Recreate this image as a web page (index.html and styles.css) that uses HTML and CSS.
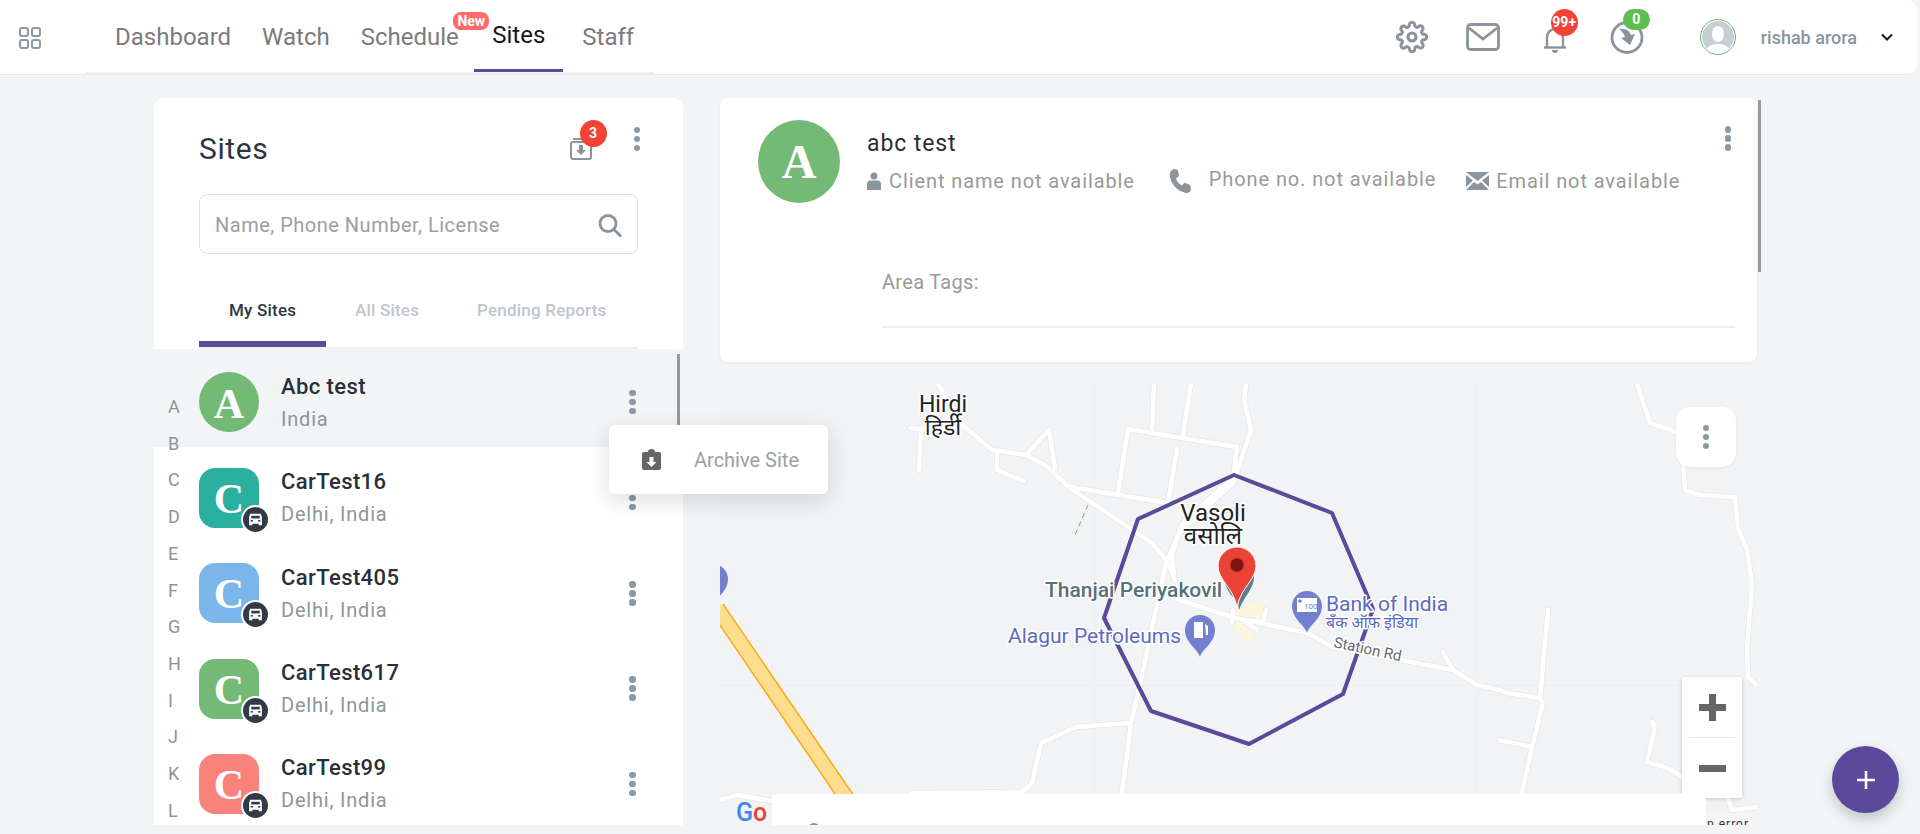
FILE: index.html
```html
<!DOCTYPE html>
<html lang="en">
<head>
    <meta charset="UTF-8">
    <title>Sites</title>
    <link rel="stylesheet" href="styles.css">
</head>
<body>

    <header class="topbar">
        <svg class="apps-icon" viewBox="0 0 22 22"><rect x="1" y="1" width="8" height="8" rx="2"/><rect x="13" y="1" width="8" height="8" rx="2"/><rect x="1" y="13" width="8" height="8" rx="2"/><rect x="13" y="13" width="8" height="8" rx="2"/></svg>

        <nav class="nav">
            <a class="nav-item first">Dashboard</a>
            <a class="nav-item">Watch</a>
            <a class="nav-item schedule">Schedule<span class="new-badge">New</span></a>
            <a class="nav-item active">Sites</a>
            <a class="nav-item staff">Staff</a>
        </nav>

        <div class="tools">
            <svg class="tool gear" viewBox="0 0 24 24"><circle cx="12" cy="12" r="3"/><path d="M19.4 15a1.65 1.65 0 0 0 .33 1.82l.06.06a2 2 0 0 1 0 2.83 2 2 0 0 1-2.83 0l-.06-.06a1.65 1.65 0 0 0-1.82-.33 1.65 1.65 0 0 0-1 1.51V21a2 2 0 0 1-2 2 2 2 0 0 1-2-2v-.09A1.65 1.65 0 0 0 9 19.4a1.65 1.65 0 0 0-1.82.33l-.06.06a2 2 0 0 1-2.83 0 2 2 0 0 1 0-2.83l.06-.06a1.65 1.65 0 0 0 .33-1.82 1.65 1.65 0 0 0-1.51-1H3a2 2 0 0 1-2-2 2 2 0 0 1 2-2h.09A1.65 1.65 0 0 0 4.6 9a1.65 1.65 0 0 0-.33-1.82l-.06-.06a2 2 0 0 1 0-2.83 2 2 0 0 1 2.83 0l.06.06a1.65 1.65 0 0 0 1.82.33H9a1.65 1.65 0 0 0 1-1.51V3a2 2 0 0 1 2-2 2 2 0 0 1 2 2v.09a1.65 1.65 0 0 0 1 1.51 1.65 1.65 0 0 0 1.82-.33l.06-.06a2 2 0 0 1 2.83 0 2 2 0 0 1 0 2.83l-.06.06a1.65 1.65 0 0 0-.33 1.82V9a1.65 1.65 0 0 0 1.51 1H21a2 2 0 0 1 2 2 2 2 0 0 1-2 2h-.09a1.65 1.65 0 0 0-1.51 1z"/></svg>
            <svg class="tool mail" viewBox="0 0 34 28"><rect x="1.5" y="1.5" width="31" height="25" rx="3"/><path d="M3 5l14 11L31 5"/></svg>
            <span class="tool-wrap bell">
                <svg class="tool" viewBox="0 0 24 26"><path d="M4 20V10a8 8 0 0 1 16 0v10"/><path d="M1 20.500h22"/><path class="solid" d="M9 23h6a3 3 0 0 1-6 0z"/></svg>
                <span class="count red">99+</span>
            </span>
            <span class="tool-wrap clock">
                <svg class="tool" viewBox="0 0 34 33"><circle cx="17" cy="16.500" r="15"/><path class="solid" d="M9 8c6-1 10 1 12 6l4-1-5 11-9-7 4-1c-1-3-3-6-6-8z"/></svg>
                <span class="count green">0</span>
            </span>
            <span class="user-pic">
                <svg viewBox="0 0 32 32"><circle cx="16" cy="16" r="16" fill="#c9ced4"/><ellipse cx="16" cy="13" rx="6" ry="8" fill="#fff"/><path d="M4 32c0-7 6-9 12-9s12 2 12 9z" fill="#fff"/></svg>
            </span>
            <span class="user-name">rishab arora</span>
            <svg class="chevron" viewBox="0 0 12 8"><path d="M1 1.500l5 5 5-5"/></svg>
        </div>
    </header>

    <main class="layout">

        <section class="sidebar">
            <div class="sites-card">
                <div class="sites-head">
                    <h1>Sites</h1>
                    <span class="archive-btn">
                        <svg viewBox="0 0 22 24"><path class="line" d="M3 3h16"/><rect class="line" x="1" y="6" width="20" height="17" rx="2"/><path class="fill" d="M9 9h4v5h3l-5 5-5-5h3z"/></svg>
                        <span class="count red">3</span>
                    </span>
                    <span class="dots"><i></i><i></i><i></i></span>
                </div>
                <div class="search">
                    <input type="text" placeholder="Name, Phone Number, License">
                    <svg viewBox="0 0 24 24"><circle cx="10" cy="10" r="8"/><path d="M16 16l7 7"/></svg>
                </div>
                <div class="tabs">
                    <a class="tab active">My Sites</a>
                    <a class="tab all">All Sites</a>
                    <a class="tab pending">Pending Reports</a>
                </div>
            </div>

            <div class="site-list">
                <div class="site-row selected">
                    <span class="site-pic round green-bg">A</span>
                    <div class="site-text"><div class="site-name">Abc test</div><div class="site-place">India</div></div>
                    <span class="dots"><i></i><i></i><i></i></span>
                </div>
                <div class="site-row">
                    <span class="site-pic teal-bg">C<span class="car"><svg viewBox="0 0 16 16"><path d="M3 2.500h10l1 3v8h-3v-1.500H5v1.500H2v-8z"/><rect class="win" x="4" y="4.500" width="8" height="2.500"/><rect class="win" x="3.500" y="8.500" width="2" height="1.500"/><rect class="win" x="10.500" y="8.500" width="2" height="1.500"/></svg></span></span>
                    <div class="site-text"><div class="site-name">CarTest16</div><div class="site-place">Delhi, India</div></div>
                    <span class="dots"><i></i><i></i><i></i></span>
                </div>
                <div class="site-row">
                    <span class="site-pic blue-bg">C<span class="car"><svg viewBox="0 0 16 16"><path d="M3 2.500h10l1 3v8h-3v-1.500H5v1.500H2v-8z"/><rect class="win" x="4" y="4.500" width="8" height="2.500"/><rect class="win" x="3.500" y="8.500" width="2" height="1.500"/><rect class="win" x="10.500" y="8.500" width="2" height="1.500"/></svg></span></span>
                    <div class="site-text"><div class="site-name">CarTest405</div><div class="site-place">Delhi, India</div></div>
                    <span class="dots"><i></i><i></i><i></i></span>
                </div>
                <div class="site-row">
                    <span class="site-pic green-bg">C<span class="car"><svg viewBox="0 0 16 16"><path d="M3 2.500h10l1 3v8h-3v-1.500H5v1.500H2v-8z"/><rect class="win" x="4" y="4.500" width="8" height="2.500"/><rect class="win" x="3.500" y="8.500" width="2" height="1.500"/><rect class="win" x="10.500" y="8.500" width="2" height="1.500"/></svg></span></span>
                    <div class="site-text"><div class="site-name">CarTest617</div><div class="site-place">Delhi, India</div></div>
                    <span class="dots"><i></i><i></i><i></i></span>
                </div>
                <div class="site-row">
                    <span class="site-pic salmon-bg">C<span class="car"><svg viewBox="0 0 16 16"><path d="M3 2.500h10l1 3v8h-3v-1.500H5v1.500H2v-8z"/><rect class="win" x="4" y="4.500" width="8" height="2.500"/><rect class="win" x="3.500" y="8.500" width="2" height="1.500"/><rect class="win" x="10.500" y="8.500" width="2" height="1.500"/></svg></span></span>
                    <div class="site-text"><div class="site-name">CarTest99</div><div class="site-place">Delhi, India</div></div>
                    <span class="dots"><i></i><i></i><i></i></span>
                </div>

                <div class="alphabet">
                    <span>A</span><span>B</span><span>C</span><span>D</span><span>E</span><span>F</span><span>G</span><span>H</span><span>I</span><span>J</span><span>K</span><span>L</span>
                </div>
                <div class="list-scroll"></div>
            </div>

            <div class="row-menu">
                <svg viewBox="0 0 19 21"><path d="M2 3h4a3.500 3 0 0 1 7 0h4a2 2 0 0 1 2 2v14a2 2 0 0 1-2 2H2a2 2 0 0 1-2-2V5a2 2 0 0 1 2-2z"/><path class="arrow" d="M7.500 8h4v5h3l-5 5-5-5h3z"/></svg>
                <span>Archive Site</span>
            </div>
        </section>

        <section class="content">
            <div class="detail-card">
                <div class="detail-top">
                    <span class="detail-pic">A</span>
                    <div class="detail-info">
                        <div class="detail-name">abc test</div>
                        <div class="detail-meta">
                            <svg class="person" viewBox="0 0 14 18"><circle cx="7" cy="4" r="3.500"/><path d="M0 18v-6a3.500 3.500 0 0 1 3.500-3.500h7A3.500 3.500 0 0 1 14 12v6z"/></svg>
                            <span class="client">Client name not available</span>
                            <svg class="phone" viewBox="3 1 19 22"><path d="M6.500 1l4 .8 1.200 5.700-3 2.200c1 3 3 5 5.500 6.500l2.500-2.500 5.300 2 .5 4.500c-1 2-2.500 3-4.500 2.800C10 21.500 3.500 14 3 6.500 3 4 4.500 2 6.500 1z"/></svg>
                            <span class="phone-text">Phone no. not available</span>
                            <svg class="envelope" viewBox="0 0 23 18"><path d="M0 0h23L11.500 9z"/><path d="M0 3l7 5.500L0 15zM23 3l-7 5.500 7 6.500z"/><path d="M0 18l8-8 3.500 2.500L15 10l8 8z"/></svg>
                            <span>Email not available</span>
                        </div>
                    </div>
                    <span class="dots"><i></i><i></i><i></i></span>
                </div>
                <div class="area-tags">Area Tags:</div>
                <div class="card-scroll"></div>
            </div>

            <div class="map">
                <svg class="map-canvas" viewBox="0 0 1037 441">
                    <defs>
                        <g id="roads">
                            <polyline points="218,0 245,43 272,66 306,71 325,81 350,104 432,159 448,178 455,196"/>
                            <polyline points="190,44 201,45 245,43"/>
                            <polyline points="201,45 199,86"/>
                            <polyline points="277,69 277,86 304,97"/>
                            <polyline points="306,71 329,46 335,84"/>
                            <polyline points="350,103 448,119"/>
                            <polyline points="398,109 408,45 517,63 513,96"/>
                            <polyline points="432,48 434,0"/>
                            <polyline points="463,51 471,0"/>
                            <polyline points="457,65 448,119"/>
                            <polyline points="526,0 524,16 531,46 513,99 459,149 446,179 421,296 411,339 402,409"/>
                            <polyline points="510,96 462,140 452,170 454,190"/>
                            <polyline points="453,214 512,233 587,249 613,263 680,276 733,286 757,301 780,306 787,309 820,314"/>
                            <polyline points="723,268 733,286"/>
                            <polyline points="828,226 820,314 823,319 812,363 802,409"/>
                            <polyline points="780,356 812,363"/>
                            <polyline points="917,0 930,39 957,48"/>
                            <polyline points="963,83 965,106 980,111 1015,113 1018,144 1027,166 1032,199 1027,266 1028,293 1037,301"/>
                            <polyline points="932,338 935,343 927,378 948,384 962,393"/>
                            <polyline points="1008,414 1012,426 1037,423"/>
                            <polyline points="408,339 356,343 321,359 312,399 302,408 191,409"/>
                            <polyline points="0,416 17,411 52,417"/>
                            <polyline points="512,239 513,226"/>
                            <polyline points="523,236 537,246"/>
                            <polyline points="527,236 543,238 546,226"/>
                        </g>
                        <path id="poi" d="M0 27C-2 19-15 13-15 0a15 15 0 0 1 30 0C15 13 2 19 0 27z"/>
                    </defs>

                    <path class="tile-seam" d="M0 301H1037M374 0V441M757 0V441"/>
                    <path class="landuse" d="M509 233L525 220 545 216 543 240 528 259 510 240z"/>
                    <use href="#roads" class="road-casing"/>
                    <use href="#roads" class="road-fill"/>
                    <path class="trail" d="M368 121L355 151"/>
                    <path class="highway-edge" d="M-3 224L128 416"/>
                    <path class="highway-fill" d="M-3 224L128 416"/>

                    <use href="#poi" x="-7" y="195" class="poi"/>
                    <use href="#poi" x="480" y="246" class="poi"/>
                    <use href="#poi" x="587" y="222" class="poi"/>
                    <path class="poi-glyph" d="M474 238h9v16h-9zM485 240l3 2v9h-2z"/>
                    <rect class="poi-glyph" x="577" y="214" width="20" height="14"/>
                    <circle class="poi" cx="580" cy="217" r="1.800"/>
                    <text class="poi-mini" x="584" y="225">100</text>

                    <path class="temple" d="M505 193C504 202 509 209 514 214 511 206 509 199 505 193zM534 191C535 204 524 212 519 226 516 212 526 202 534 191z"/>

                    <polygon class="fence" points="514,91 612,129 653,225 623,310 529,360 431,327 384,234 418,135"/>

                    <text class="place" x="223" y="28" text-anchor="middle">Hirdi</text>
                    <text class="place" x="223" y="51" text-anchor="middle" lang="hi">हिर्डी</text>
                    <text class="place big" x="493" y="137" text-anchor="middle">Vasoli</text>
                    <text class="place big" x="493" y="160" text-anchor="middle" lang="hi">वसोलि</text>
                    <text class="temple-label" x="325" y="213">Thanjai Periyakovil</text>
                    <text class="poi-label" x="288" y="259">Alagur Petroleums</text>
                    <text class="poi-label" x="606" y="227">Bank of India</text>
                    <text class="poi-label small" x="606" y="244" lang="hi">बँक ऑफ इंडिया</text>
                    <text class="road-label" transform="translate(613 263) rotate(12)">Station Rd</text>

                    <path class="pin" d="M517 223C513 203 498 196 498 182a19 19 0 0 1 38 0C536 196 521 203 517 223z"/>
                    <circle class="pin-dot" cx="517" cy="181" r="6.700"/>

                    <text class="google" x="16" y="437"><tspan class="g-blue">G</tspan><tspan class="g-red">o</tspan></text>
                    <rect class="attrib" x="986" y="429" width="51" height="12"/>
                    <text class="attrib-text" x="987" y="444">p error</text>
                </svg>

                <span class="map-menu"><span class="dots"><i></i><i></i><i></i></span></span>
                <div class="zoom-box">
                    <span class="zoom-btn"><svg viewBox="0 0 27 27"><path d="M10 0h7v10h10v7H17v10h-7V17H0v-7h10z"/></svg></span>
                    <span class="zoom-line"></span>
                    <span class="zoom-btn"><svg viewBox="0 0 27 27"><path d="M0 10h27v7H0z"/></svg></span>
                </div>
                <div class="map-panel"><i></i></div>
            </div>
        </section>

    </main>

    <a class="fab"><svg viewBox="0 0 18 18"><path d="M7.700 0h2.600v7.700H18v2.600h-7.700V18H7.700v-7.700H0V7.700h7.700z"/></svg></a>

</body>
</html>
```

FILE: styles.css
```css
* {
    box-sizing: border-box;
}

html, body {
    height: 834px;
    overflow: hidden;
}

body {
    margin: 0;
    background: #f2f5f6;
    font-family: Roboto, sans-serif;
    color: #2f3743;
}

/* top bar */
.topbar {
    display: flex;
    align-items: stretch;
    width: 1917px;
    height: 75px;
    background: #fff;
    border-bottom: 1px solid #e7eaec;
    border-bottom-right-radius: 10px;
    border-top-right-radius: 10px;
}

.apps-icon {
    width: 22px;
    height: 22px;
    margin: 27px 0 0 19px;
    fill: none;
    stroke: #8f99a3;
    stroke-width: 2;
}

.nav {
    display: flex;
    width: 568px;
    height: 74px;
    margin-left: 45px;
    border-bottom: 2px solid #edeef0;
}

.nav-item {
    position: relative;
    padding: 0 15.5px;
    font-size: 24px;
    line-height: 75px;
    color: #7b7b7b;
}

.nav-item.first {
    padding-left: 29px;
}

.nav-item.active {
    height: 72px;
    padding: 0 18px 0 18px;
    border-bottom: 3px solid #5b4a9a;
    line-height: 71px;
    color: #14171c;
}

.nav-item.staff {
    margin-left: 3.500px;
}

.new-badge {
    position: absolute;
    top: 12px;
    right: -15px;
    width: 36px;
    height: 18px;
    background: #ff6b6b;
    border-radius: 8px;
    font-size: 14px;
    font-weight: 700;
    line-height: 18px;
    text-align: center;
    color: #fff;
}

.tools {
    display: flex;
    align-items: center;
    margin-left: auto;
    padding-right: 24px;
}

.tool {
    display: block;
    fill: none;
    stroke: #8b949c;
    stroke-width: 2;
}

.tool .solid {
    fill: #8b949c;
    stroke: none;
}

.gear {
    width: 32px;
    height: 32px;
    stroke-width: 2.300;
}

.mail {
    width: 34px;
    height: 28px;
    margin-left: 38px;
    stroke-width: 2.800;
}

.tool-wrap {
    position: relative;
    display: block;
}

.bell {
    margin-left: 43px;
    margin-top: 5px;
}

.bell svg {
    width: 24px;
    height: 26px;
    stroke-width: 2.400;
}

.clock {
    margin-left: 43px;
}

.clock svg {
    width: 34px;
    height: 33px;
    stroke-width: 2.800;
}

.count {
    position: absolute;
    border-radius: 14px;
    font-size: 14px;
    font-weight: 700;
    line-height: 27px;
    text-align: center;
    color: #fff;
}

.count.red {
    background: #f44336;
}

.count.green {
    background: #5cbf4e;
}

.bell .count {
    top: -18px;
    left: 8px;
    width: 27px;
    height: 27px;
}

.clock .count {
    top: -12px;
    left: 13px;
    width: 27px;
    height: 21px;
    line-height: 21px;
}

.user-pic {
    width: 36px;
    height: 36px;
    margin-left: 56px;
    padding: 1px;
    border: 1px solid #5cbf7a;
    border-radius: 50%;
}

.user-pic svg {
    display: block;
    width: 32px;
    height: 32px;
    border-radius: 50%;
}

.user-name {
    margin-left: 25px;
    font-size: 18px;
    font-weight: 500;
    color: #8b949c;
}

.chevron {
    width: 12px;
    height: 8px;
    margin-left: 24px;
    fill: none;
    stroke: #14171c;
    stroke-width: 2;
}

/* page */
.layout {
    display: flex;
    gap: 37px;
    height: 750px;
    padding: 23px 0 0 154px;
}

.sidebar {
    position: relative;
    z-index: 5;
    display: flex;
    flex-direction: column;
    width: 529px;
    height: 727px;
}

.sites-card {
    height: 251px;
    padding: 0 45px;
    background: #fff;
    border-radius: 10px 10px 0 0;
}

.sites-head {
    display: flex;
    align-items: center;
    height: 96px;
}

.sites-head h1 {
    margin: 0 auto 0 0;
    padding-top: 5px;
    font-size: 30px;
    font-weight: 400;
    letter-spacing: 0.6px;
    color: #2c3643;
}

.archive-btn {
    position: relative;
    top: 2px;
    width: 22px;
    height: 24px;
    margin: 0 42px 0 0;
}

.archive-btn svg {
    display: block;
    width: 22px;
    height: 24px;
}

.archive-btn .line {
    fill: none;
    stroke: #8b959e;
    stroke-width: 2;
}

.archive-btn .fill {
    fill: #8b959e;
}

.archive-btn .count {
    top: -16px;
    left: 10px;
    width: 27px;
    height: 27px;
}

.dots {
    display: flex;
    flex-direction: column;
    gap: 2.500px;
    flex-shrink: 0;
}

.dots i {
    display: block;
    width: 6.500px;
    height: 6.500px;
    background: #8c98a3;
    border-radius: 50%;
}

.sites-head .dots {
    position: relative;
    top: -7px;
    margin-right: -2px;
}

.search {
    display: flex;
    align-items: center;
    width: 439px;
    height: 60px;
    padding: 2px 15px 0 13px;
    border: 1px solid #e0e2e4;
    border-radius: 8px;
}

.search input {
    flex: 1;
    min-width: 0;
    border: none;
    outline: none;
    background: none;
    font-family: Roboto, sans-serif;
    font-size: 20px;
    letter-spacing: 0.5px;
    color: #9a9ea2;
}

.search input::placeholder {
    color: #9a9ea2;
    opacity: 1;
}

.search svg {
    width: 24px;
    height: 25px;
    fill: none;
    stroke: #87929c;
    stroke-width: 2.800;
}

.tabs {
    display: flex;
    width: 439px;
    height: 95px;
    border-bottom: 2px solid #f0f1f2;
    padding-top: 46px;
}

.tab {
    font-size: 17px;
    font-weight: 500;
    letter-spacing: 0.2px;
    line-height: 20px;
    color: #c0c6cd;
}

.tab.active {
    width: 127px;
    height: 47px;
    padding-left: 30px;
    border-bottom: 6px solid #5b4a9a;
    margin-bottom: -2px;
    color: #2f3743;
}

.tab.all {
    margin-left: 29px;
}

.tab.pending {
    margin-left: 58px;
}

/* site list */
.site-list {
    position: relative;
    flex: 1;
    margin-top: 2px;
    background: #fff;
    overflow: hidden;
}

.site-row {
    display: flex;
    align-items: center;
    height: 95.330px;
    padding: 0 47.500px 0 45px;
}

.site-row.selected {
    height: 96px;
    margin-bottom: 3.300px;
    padding-top: 6px;
    background: #f2f5f6;
}

.site-pic {
    position: relative;
    width: 60px;
    height: 60px;
    flex-shrink: 0;
    border-radius: 16px;
    font-family: "Liberation Serif", serif;
    font-size: 42px;
    font-weight: 700;
    line-height: 62px;
    text-align: center;
    color: #fff;
}

.site-pic.round {
    border-radius: 50%;
    line-height: 64px;
}

.green-bg {
    background: #75b977;
}

.teal-bg {
    background: #2bb09f;
}

.blue-bg {
    background: #7ab6ea;
}

.salmon-bg {
    background: #f9837a;
}

.car {
    position: absolute;
    right: -11px;
    bottom: -6px;
    width: 29px;
    height: 29px;
    padding: 4px;
    background: #333a47;
    border: 2px solid #fff;
    border-radius: 50%;
}

.car svg {
    display: block;
    width: 17px;
    height: 17px;
    fill: #fff;
}

.car .win {
    fill: #333a47;
}

.site-text {
    flex: 1;
    margin-left: 22px;
}

.site-name {
    font-size: 22px;
    font-weight: 500;
    letter-spacing: 0.4px;
    line-height: 26px;
    color: #2a2f38;
}

.site-place {
    margin-top: 7px;
    font-size: 20px;
    letter-spacing: 0.8px;
    line-height: 24px;
    color: #8d959d;
}

.alphabet {
    position: absolute;
    top: 38px;
    left: 14px;
    display: flex;
    flex-direction: column;
    font-size: 18px;
    line-height: 36.700px;
    color: #8a949d;
}

.list-scroll {
    position: absolute;
    top: 3px;
    right: 3px;
    width: 3px;
    height: 80px;
    background: #999;
}

.row-menu {
    position: absolute;
    top: 327px;
    left: 455px;
    display: flex;
    align-items: center;
    width: 219px;
    height: 69px;
    padding-left: 33px;
    background: #fff;
    border-radius: 6px;
    box-shadow: 0 6px 22px rgba(0, 0, 0, 0.14);
    font-size: 20px;
    color: #9aa0a6;
}

.row-menu svg {
    width: 19px;
    height: 21px;
    margin-right: 33px;
    fill: #666;
}

.row-menu .arrow {
    fill: #fff;
}

/* detail card */
.content {
    display: flex;
    flex-direction: column;
    width: 1037px;
    height: 727px;
}

.detail-card {
    position: relative;
    height: 264px;
    background: #fff;
    border-radius: 8px;
    box-shadow: 0 1px 3px rgba(0, 0, 0, 0.05);
}

.detail-top {
    display: flex;
    padding: 22px 26px 0 38px;
}

.detail-pic {
    width: 82px;
    height: 83px;
    flex-shrink: 0;
    background: #75b977;
    border-radius: 50%;
    font-family: "Liberation Serif", serif;
    font-size: 48px;
    font-weight: 700;
    line-height: 84px;
    text-align: center;
    color: #fff;
}

.detail-info {
    flex: 1;
    margin-left: 27px;
}

.detail-name {
    margin-top: 11px;
    font-size: 23px;
    font-weight: 400;
    letter-spacing: 0.9px;
    line-height: 26px;
    color: #2a2f38;
}

.detail-meta {
    display: flex;
    align-items: center;
    margin-top: 11px;
    font-size: 20px;
    letter-spacing: 0.9px;
    line-height: 26px;
    color: #999;
}

.detail-meta svg {
    flex-shrink: 0;
    fill: #8b959e;
}

.person {
    width: 14px;
    height: 18px;
    margin-right: 8px;
}

.phone {
    width: 24px;
    height: 24px;
    margin: 0 17px 0 33px;
}

.phone-text {
    position: relative;
    top: -2px;
}

.envelope {
    width: 23px;
    height: 18px;
    margin: 0 7px 0 30px;
}

.detail-top > .dots {
    margin-top: 6px;
}

.area-tags {
    height: 59px;
    margin: 66px 22px 0 162px;
    border-bottom: 2px solid #eee;
    font-size: 20px;
    letter-spacing: 0.3px;
    line-height: 26px;
    color: #999;
}

.card-scroll {
    position: absolute;
    top: 2px;
    right: -4px;
    width: 3px;
    height: 172px;
    background: #999;
}

/* map */
.map {
    position: relative;
    height: 441px;
    margin-top: 22px;
    background: #f2f3f5;
    overflow: hidden;
}

.map-canvas {
    display: block;
    width: 1037px;
    height: 441px;
    font-family: Roboto, "Noto Sans", sans-serif;
}

.tile-seam {
    fill: none;
    stroke: #eceef0;
    stroke-width: 1;
}

.landuse {
    fill: #fdf6dd;
}

.road-casing, .road-fill {
    fill: none;
    stroke-linejoin: round;
    stroke-linecap: round;
}

.road-casing {
    stroke: #e5e7ea;
    stroke-width: 6;
}

.road-fill {
    stroke: #fff;
    stroke-width: 4.500;
}

.trail {
    stroke: #5cb07b;
    stroke-width: 1;
    stroke-dasharray: 5 4;
}

.highway-edge {
    stroke: #f5ab16;
    stroke-width: 16;
}

.highway-fill {
    stroke: #fdde8e;
    stroke-width: 13;
}

.poi {
    fill: #7280cf;
}

.poi-glyph {
    fill: #fff;
}

.poi-mini {
    font-size: 8px;
    fill: #7280cf;
}

.temple {
    fill: #607d8b;
}

.fence {
    fill: none;
    stroke: #5b4a9a;
    stroke-width: 4;
    stroke-linejoin: round;
}

.place, .temple-label, .poi-label, .road-label {
    paint-order: stroke;
    stroke: #fff;
    stroke-width: 3px;
    stroke-linejoin: round;
}

.place {
    font-size: 23px;
}

.place {
    fill: #222;
}

.place.big {
    font-size: 24px;
}

.temple-label {
    font-size: 21px;
    font-weight: 500;
    fill: #56707c;
}

.poi-label {
    font-size: 21px;
    fill: #5c6bc0;
}

.poi-label.small {
    font-size: 16px;
}

.road-label {
    font-size: 15px;
    fill: #5f6b73;
}

.pin {
    fill: #ea4335;
    stroke: #fff;
    stroke-width: 1;
}

.pin-dot {
    fill: #7e1610;
}

.google {
    font-size: 25px;
    font-weight: 500;
}

.g-blue {
    fill: #4285f4;
}

.g-red {
    fill: #ea4335;
}

.attrib {
    fill: #f5f5f5;
}

.attrib-text {
    font-size: 12px;
    letter-spacing: 1px;
    fill: #333;
}

.map-menu {
    position: absolute;
    top: 23px;
    left: 956px;
    display: flex;
    align-items: center;
    justify-content: center;
    width: 60px;
    height: 60px;
    background: #fff;
    border-radius: 14px;
    box-shadow: 0 1px 3px rgba(0, 0, 0, 0.06);
}

.zoom-box {
    position: absolute;
    top: 293px;
    left: 962px;
    width: 60px;
    height: 121px;
    background: #fff;
    border-radius: 2px;
    box-shadow: 0 1px 4px rgba(0, 0, 0, 0.18);
}

.zoom-btn {
    display: flex;
    align-items: center;
    justify-content: center;
    height: 60px;
}

.zoom-btn svg {
    width: 27px;
    height: 27px;
    fill: #666;
}

.zoom-line {
    display: block;
    height: 1px;
    margin: 0 8px;
    background: #e6e6e6;
}

.map-panel {
    position: absolute;
    left: 52px;
    bottom: 0;
    width: 934px;
    height: 31px;
    background: #fff;
    border-radius: 4px 4px 0 0;
}

.map-panel i {
    position: absolute;
    top: 29px;
    left: 36px;
    width: 12px;
    height: 12px;
    background: #8b959e;
    border-radius: 50%;
}

.fab {
    position: absolute;
    top: 746px;
    left: 1832px;
    z-index: 6;
    display: flex;
    align-items: center;
    justify-content: center;
    width: 67px;
    height: 67px;
    background: #5b4a9a;
    border-radius: 50%;
    box-shadow: 0 6px 14px rgba(0, 0, 0, 0.2);
}

.fab svg {
    width: 18px;
    height: 18px;
    fill: #fff;
}
```
